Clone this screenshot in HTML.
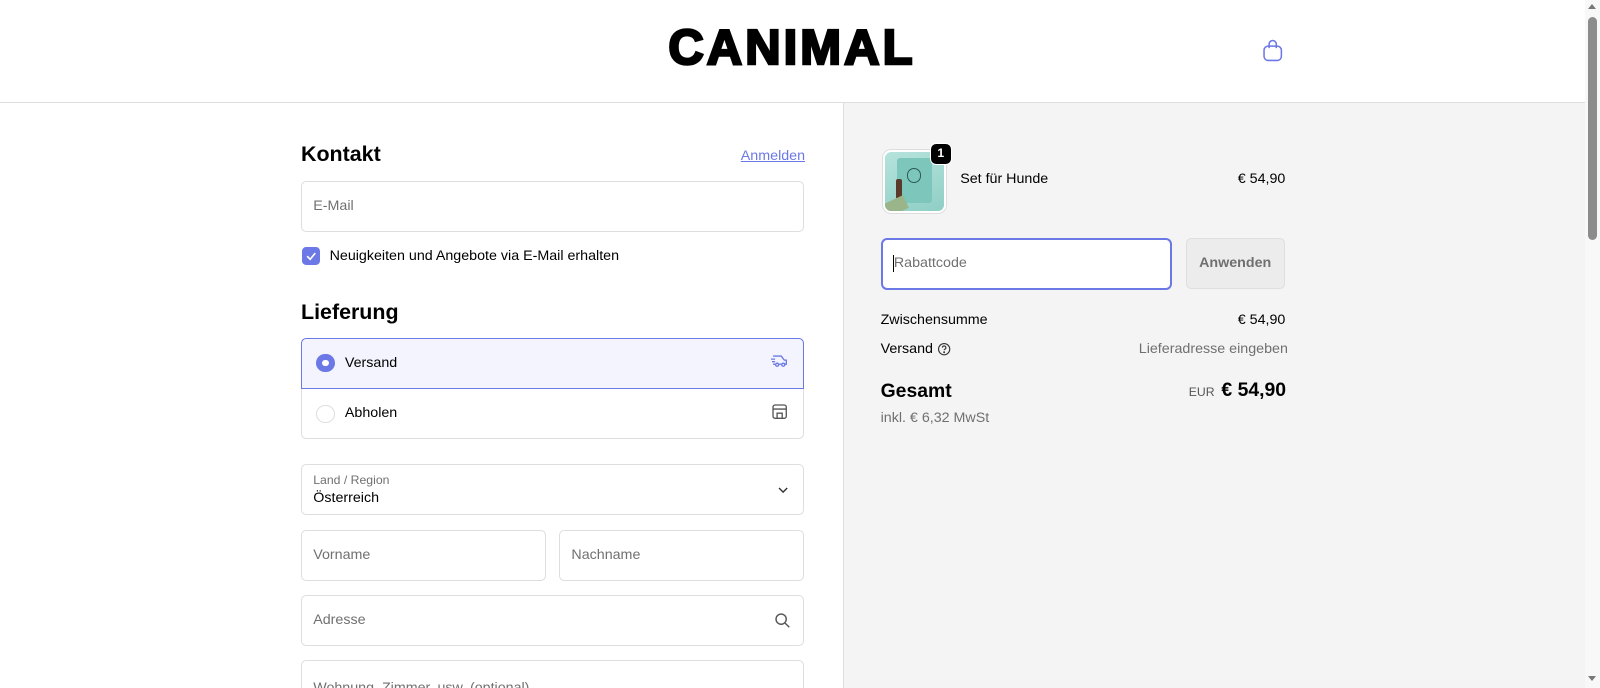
<!DOCTYPE html>
<html><head><meta charset="utf-8"><style>
html{zoom:1.0204;height:674px;overflow:hidden}
*{box-sizing:border-box;margin:0;padding:0}
body{width:1568px;height:674px;overflow:hidden;font-family:"Liberation Sans",sans-serif;color:#000;background:#fff;position:relative}
.abs{position:absolute}
.hdr{left:0;top:0;width:1553px;height:101px;border-bottom:1px solid #dedede;background:#fff}
.logo{left:655px;top:23px;font-size:48px;font-weight:900;letter-spacing:3px;line-height:50px;-webkit-text-stroke:2.5px #000}
.right{left:826px;top:101px;width:727px;height:573px;background:#f4f4f4;border-left:1px solid #dedede}
.sb{left:1553px;top:0;width:15px;height:674px;background:#f8f8f8}
.thumb{left:1556px;top:17px;width:9px;height:218px;background:#8c8c8c;border-radius:5px}
h2{position:absolute;font-size:21px;font-weight:700}
.inp{position:absolute;border:1px solid #dedede;border-radius:5px;background:#fff;height:50px;font-size:14px;color:#707070;padding-left:11px;line-height:48px}
.t{position:absolute;font-size:14px;white-space:nowrap}
</style></head><body>
<div class="abs hdr"></div>
<div class="abs logo">CANIMAL</div>
<svg class="abs" style="left:1237px;top:38px" width="21" height="23" viewBox="0 0 21 23" fill="none" stroke="#6b78e5" stroke-width="1.5"><rect x="2" y="7" width="17" height="14" rx="4"/><path d="M7 9V5a3.5 3.5 0 0 1 7 0v4"/></svg>
<div class="abs right"></div>
<div class="abs sb"></div>
<div class="abs thumb"></div>
<div class="abs" style="left:1556px;top:4px;width:0;height:0;border:4px solid transparent;border-bottom:5px solid #777;border-top:0"></div>
<div class="abs" style="left:1556px;top:662px;width:0;height:0;border:4px solid transparent;border-top:5px solid #777;border-bottom:0"></div>

<h2 style="left:295px;top:139px">Kontakt</h2>
<div class="t" style="left:726px;top:145px;color:#6b78e5;text-decoration:underline">Anmelden</div>
<div class="inp" style="left:295px;top:177px;width:493px">E-Mail</div>
<div class="abs" style="left:296px;top:242px;width:18px;height:18px;background:#6b78e5;border-radius:4px"><svg width="18" height="18"><path d="M5 9l3 3 5-6" stroke="#fff" stroke-width="1.6" fill="none"/></svg></div>
<div class="t" style="left:323px;top:243px">Neuigkeiten und Angebote via E-Mail erhalten</div>
<h2 style="left:295px;top:294px">Lieferung</h2>
<div class="abs" style="left:295px;top:331px;width:493px;height:99px;border:1px solid #dedede;border-radius:5px"></div>
<div class="abs" style="left:295px;top:331px;width:493px;height:50px;border:1px solid #6b78e5;border-radius:5px 5px 0 0;background:#f3f4fd"></div>
<div class="abs" style="left:310px;top:347px;width:18px;height:18px;border-radius:50%;background:#6b78e5"><div class="abs" style="left:6px;top:6px;width:6px;height:6px;border-radius:50%;background:#fff"></div></div>
<div class="t" style="left:338px;top:348px">Versand</div>
<svg class="abs" style="left:755px;top:346px" width="18" height="16" viewBox="0 0 18 16" fill="none" stroke="#6b78e5" stroke-width="1.3"><path d="M3 3h8l3 4h2v4h-2M3 11h2M9 11h2M1 6h4M2 8.5h3"/><circle cx="7" cy="11.5" r="1.5"/><circle cx="13" cy="11.5" r="1.5"/></svg>
<div class="abs" style="left:310px;top:397px;width:18px;height:18px;border-radius:50%;border:1px solid #dedede;background:#fff"></div>
<div class="t" style="left:338px;top:397px">Abholen</div>
<svg class="abs" style="left:757px;top:396px" width="15" height="15" viewBox="0 0 15 15" fill="none" stroke="#555" stroke-width="1.3"><rect x="1" y="1" width="13" height="13" rx="2"/><path d="M1 5h13M5 14V9h5v5"/></svg>
<div class="abs" style="left:295px;top:455px;width:493px;height:50px;border:1px solid #dedede;border-radius:5px"></div>
<div class="t" style="left:307px;top:464px;font-size:12px;color:#707070">Land / Region</div>
<div class="t" style="left:307px;top:480px">Österreich</div>
<svg class="abs" style="left:761px;top:476px" width="12" height="8"><path d="M2 2l4 4 4-4" stroke="#333" stroke-width="1.4" fill="none"/></svg>
<div class="inp" style="left:295px;top:519px;width:240px">Vorname</div>
<div class="inp" style="left:548px;top:519px;width:240px">Nachname</div>
<div class="inp" style="left:295px;top:583px;width:493px">Adresse</div>
<svg class="abs" style="left:759px;top:600px" width="16" height="16" fill="none" stroke="#555" stroke-width="1.4"><circle cx="7" cy="7" r="5"/><path d="M11 11l4 4"/></svg>
<div class="inp" style="left:295px;top:647px;width:493px;height:60px;padding-top:3px">Wohnung, Zimmer, usw. (optional)</div>

<div class="abs" style="left:865px;top:147px;width:62px;height:62px;border-radius:8px;border:2px solid #fff;background:linear-gradient(160deg,#b6e3dc,#8fcfc5);overflow:hidden;box-shadow:0 0 0 1px #ddd">
<div class="abs" style="left:12px;top:6px;width:34px;height:44px;background:#7cc6bb;border-radius:3px"></div>
<div class="abs" style="left:22px;top:16px;width:14px;height:14px;border:1.5px solid #2c5a55;border-radius:50%"></div>
<div class="abs" style="left:11px;top:26px;width:6px;height:20px;background:#5a3a2a;border-radius:2px"></div>
<div class="abs" style="left:0;top:46px;width:22px;height:14px;background:#9bb58a;transform:rotate(-25deg)"></div></div>
<div class="abs" style="left:911px;top:140px;width:22px;height:22px;border-radius:6px;background:#000;border:1.5px solid #fff;color:#fff;font-size:12px;font-weight:700;text-align:center;line-height:19px">1</div>
<div class="t" style="left:941px;top:168px">Set für Hunde</div>
<div class="t" style="left:1213px;top:168px">€ 54,90</div>
<div class="abs" style="left:863px;top:233px;width:286px;height:51px;border:2px solid #6b78e5;border-radius:6px;background:#fff"></div>
<div class="abs" style="left:875px;top:250px;width:1px;height:17px;background:#000"></div>
<div class="t" style="left:876px;top:250px;color:#707070">Rabattcode</div>
<div class="abs" style="left:1162px;top:233px;width:97px;height:50px;border:1px solid #dedede;border-radius:5px;background:#ececec;color:#707070;font-weight:700;font-size:14px;text-align:center;line-height:48px">Anwenden</div>
<div class="t" style="left:863px;top:306px">Zwischensumme</div>
<div class="t" style="left:1213px;top:306px">€ 54,90</div>
<div class="t" style="left:863px;top:334px">Versand</div>
<svg class="abs" style="left:918px;top:335px" width="14" height="14" fill="none" stroke="#333" stroke-width="1.1"><circle cx="7" cy="7" r="5.5"/><path d="M5.3 5.5a1.7 1.7 0 1 1 2.3 1.6c-.5.2-.6.5-.6 1"/><circle cx="7" cy="10" r=".4" fill="#333"/></svg>
<div class="t" style="left:1116px;top:334px;color:#707070">Lieferadresse eingeben</div>
<div class="t" style="left:863px;top:372px;font-size:19px;font-weight:700">Gesamt</div>
<div class="t" style="left:1165px;top:377px;font-size:12px;color:#555">EUR</div>
<div class="t" style="left:1197px;top:371px;font-size:19px;font-weight:700">€ 54,90</div>
<div class="t" style="left:863px;top:402px;color:#707070">inkl. € 6,32 MwSt</div>
</body></html>
